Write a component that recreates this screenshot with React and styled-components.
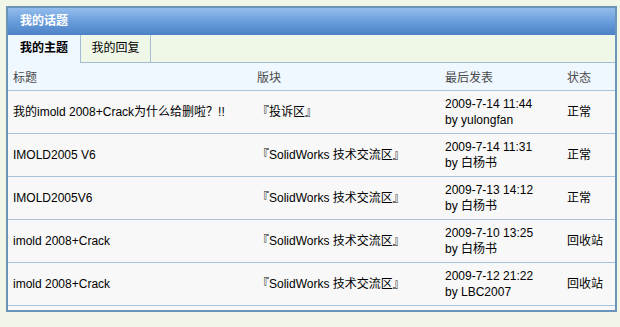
import styled, { createGlobalStyle } from 'styled-components'

const GlobalStyle = createGlobalStyle`
	body {
		margin: 0;
		background: #f0f7e8;
		font-family: 'Liberation Sans', 'Noto Sans CJK SC', sans-serif;
		font-size: 12px;
	}
`

const topics = [
	{ title: '我的imold 2008+Crack为什么给删啦？!!', forum: '『投诉区』', date: '2009-7-14 11:44', by: 'yulongfan', status: '正常' },
	{ title: 'IMOLD2005 V6', forum: '『SolidWorks 技术交流区』', date: '2009-7-14 11:31', by: '白杨书', status: '正常' },
	{ title: 'IMOLD2005V6', forum: '『SolidWorks 技术交流区』', date: '2009-7-13 14:12', by: '白杨书', status: '正常' },
	{ title: 'imold 2008+Crack', forum: '『SolidWorks 技术交流区』', date: '2009-7-10 13:25', by: '白杨书', status: '回收站' },
	{ title: 'imold 2008+Crack', forum: '『SolidWorks 技术交流区』', date: '2009-7-12 21:22', by: 'LBC2007', status: '回收站' },
]

const App = () => {
	return (
		<Page>
			<GlobalStyle />
			<Panel>
				<Header>我的话题</Header>
				<Tabs>
					<Tab $active>我的主题</Tab>
					<Tab>我的回复</Tab>
				</Tabs>
				<HeadRow>
					<span>标题</span>
					<span>版块</span>
					<span>最后发表</span>
					<span>状态</span>
				</HeadRow>
				{topics.map((t, i) => (
					<Row key={i}>
						<span>{t.title}</span>
						<span>{t.forum}</span>
						<span>
							{t.date}
							<br />
							by {t.by}
						</span>
						<span>{t.status}</span>
					</Row>
				))}
				<Footer />
			</Panel>
		</Page>
	)
}

const Page = styled.div`
	padding: 6px 3px 0 6px;
`

const Panel = styled.div`
	width: 607px;
	border: 2px solid #6a95b9;
	background: #f8f8f8;
`

const Header = styled.div`
	height: 27px;
	line-height: 27px;
	padding-left: 12px;
	color: #fff;
	font-weight: bold;
	background: linear-gradient(to bottom, #94bdec 0%, #6a9ddc 50%, #4b81c6 100%);
`

const Tabs = styled.div`
	display: flex;
	height: 27px;
	background: #eff7e7;
	border-bottom: 1px solid #a3bed4;
`

const Tab = styled.div`
	width: ${p => (p.$active ? '72px' : '69px')};
	height: ${p => (p.$active ? '28px' : '27px')};
	line-height: 27px;
	text-align: center;
	color: #000;
	font-weight: ${p => (p.$active ? 'bold' : 'normal')};
	background: ${p => (p.$active ? '#eff7ff' : '#eff7e7')};
	border-right: 1px solid #a3bed4;
`

const Grid = styled.div`
	display: grid;
	grid-template-columns: 244px 188px 122px 1fr;
	align-items: center;
	border-bottom: 1px solid #a8c4dc;

	span {
		padding-left: 5px;
	}
`

const HeadRow = styled(Grid)`
	height: 27px;
	color: #4a4a4a;
	background: #eff7ff;
`

const Row = styled(Grid)`
	height: 42px;
	color: #000;
	line-height: 16px;
	background: #f8f8f8;
`

const Footer = styled.div`
	height: 4px;
`

export default App
